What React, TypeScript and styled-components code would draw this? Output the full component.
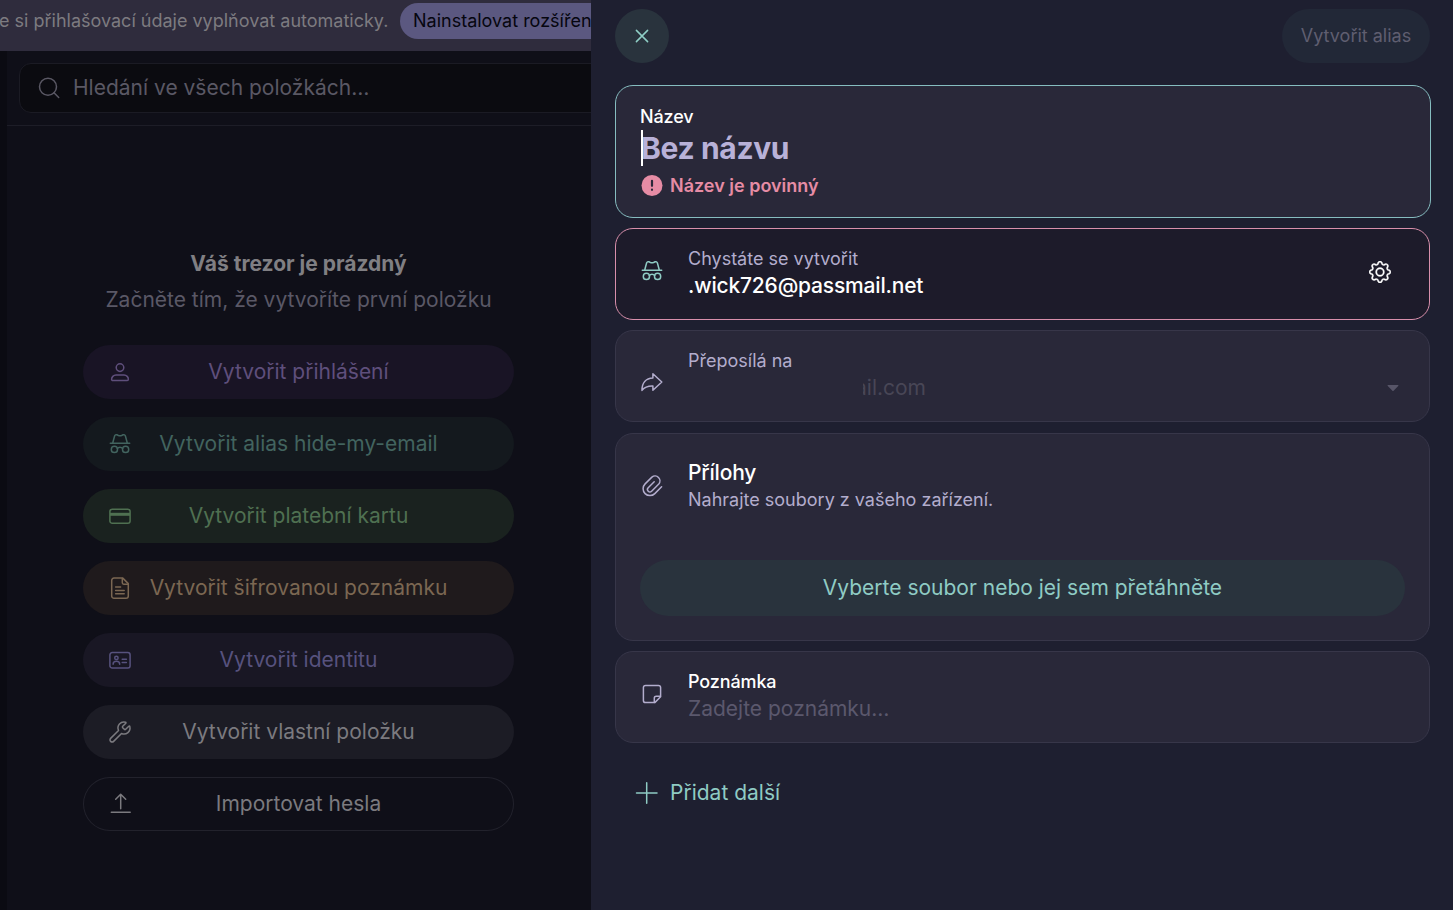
import React from 'react';
import styled, { createGlobalStyle } from 'styled-components';
import { Wrench } from 'lucide-react';
import { BsGear } from 'react-icons/bs';

const GlobalStyle = createGlobalStyle`
  *, *::before, *::after { box-sizing: border-box; }
  body { margin: 0; background: #0f0f18; }
  button { font: inherit; border: 0; padding: 0; }
`;

const Page = styled.div`
  display: grid;
  grid-template-columns: 591px 1fr;
  width: 1453px;
  height: 910px;
  overflow: hidden;
  font-family: Inter, 'Liberation Sans', sans-serif;
  font-size: 21px;
  line-height: 30px;
  white-space: nowrap;
`;

const Vault = styled.div`
  display: flex;
  flex-direction: column;
  min-width: 0;
  overflow: hidden;
  background: #0f0f18;
`;

const Banner = styled.div`
  display: flex;
  align-items: flex-start;
  flex: none;
  height: 51px;
  padding-top: 3px;
  background: #2f2c3d;
`;

const BannerText = styled.span`
  flex: none;
  width: 400px;
  margin-left: -1px;
  margin-right: 1px;
  font-size: 18px;
  line-height: 36px;
  color: #7d7b80;
`;

const InstallButton = styled.button`
  flex: none;
  height: 36px;
  padding: 0 13px;
  border-radius: 18px;
  background: #5b5880;
  color: #06060f;
  font-size: 18px;
`;

const VaultBody = styled.div`
  flex: 1;
  display: flex;
  flex-direction: column;
  border-left: 7px solid #0b0b12;
`;

const SearchBar = styled.div`
  height: 75px;
  padding: 12px 0 12px 12px;
  border-bottom: 1px solid #1d1d27;
`;

const SearchField = styled.div`
  display: flex;
  align-items: center;
  gap: 12px;
  width: 640px;
  height: 50px;
  padding-left: 17px;
  border: 1px solid #1b1b24;
  border-radius: 12px;
  background: #0b0b10;
  color: #5a5864;
`;

const Empty = styled.div`
  display: flex;
  flex-direction: column;
  align-items: center;
  padding: 123px 77px 0 76px;
`;

const EmptyTitle = styled.h2`
  margin: 0;
  font-size: 21px;
  font-weight: 700;
  line-height: 30px;
  color: #807f83;
`;

const EmptyHint = styled.p`
  margin: 6px 0 30px;
  color: #5a5866;
`;

const Actions = styled.div`
  display: flex;
  flex-direction: column;
  gap: 18px;
  width: 431px;
`;

const Action = styled.button<{ $bg: string; $fg: string; $line?: string }>`
  display: flex;
  align-items: center;
  height: 54px;
  padding: 0 25px;
  border-radius: 27px;
  background: ${p => p.$bg};
  color: ${p => p.$fg};
  box-shadow: inset 0 0 0 1px ${p => p.$line ?? 'transparent'};
`;

const ActionLabel = styled.span`
  flex: 1;
  margin-right: 24px;
  text-align: center;
`;

const Drawer = styled.aside`
  display: flex;
  flex-direction: column;
  padding: 9px 22px 0 24px;
  background: #1e1f30;
`;

const DrawerHeader = styled.header`
  display: flex;
  justify-content: space-between;
  width: 815px;
  margin-bottom: 22px;
`;

const CloseButton = styled.button`
  display: flex;
  align-items: center;
  justify-content: center;
  width: 54px;
  height: 54px;
  border-radius: 50%;
  background: #29333d;
  color: #8fcfc6;
`;

const SubmitButton = styled.button`
  width: 148px;
  height: 54px;
  border-radius: 27px;
  background: #222837;
  color: #5f5e70;
  font-size: 18px;
`;

const TitleCard = styled.section`
  position: relative;
  width: 816px;
  height: 133px;
  margin-bottom: 10px;
  padding: 17px 24px;
  border: 1px solid #86bdc0;
  border-radius: 18px;
  background: #292839;
`;

const Label = styled.div<{ $muted?: boolean }>`
  font-size: 18px;
  line-height: 27px;
  color: ${p => (p.$muted ? '#b3adcd' : '#fff')};
  font-weight: ${p => (p.$muted ? 400 : 500)};
  letter-spacing: ${p => (p.$muted ? '0' : '-0.12px')};
`;

const TitleInput = styled.div`
  padding-left: 1px;
  font-size: 30px;
  font-weight: 700;
  line-height: 36px;
  letter-spacing: -0.35px;
  color: #b8b1d8;
`;

const Caret = styled.span`
  position: absolute;
  left: 25px;
  top: 44px;
  width: 2px;
  height: 36px;
  background: #fff;
`;

const ErrorLine = styled.div`
  display: flex;
  align-items: center;
  gap: 7px;
  margin-top: 6px;
  padding-left: 1px;
  font-size: 18px;
  font-weight: 600;
  line-height: 27px;
  color: #e68ca5;
`;

const Card = styled.section<{ $height: number; $gap?: number; $alert?: boolean }>`
  width: 815px;
  height: ${p => p.$height}px;
  margin-bottom: ${p => p.$gap ?? 10}px;
  padding: 16px 24px;
  border: 1px solid ${p => (p.$alert ? '#d88fab' : '#373649')};
  border-radius: 18px;
  background: ${p => (p.$alert ? '#1d1b2a' : '#292839')};
`;

const Field = styled.div`
  display: flex;
`;

const FieldIcon = styled.div<{ $top: number; $color?: string }>`
  display: flex;
  flex: none;
  width: 24px;
  height: 24px;
  margin-top: ${p => p.$top}px;
  margin-right: 24px;
  color: ${p => p.$color ?? '#b3adcd'};
`;

const FieldText = styled.div`
  flex: 1;
`;

const Value = styled.div<{ $color?: string; $weight?: number }>`
  line-height: 27px;
  color: ${p => p.$color ?? '#fff'};
  font-weight: ${p => p.$weight ?? 400};
  letter-spacing: ${p => (p.$weight ? '-0.18px' : '0')};
`;

const HiddenValue = styled(Value)`
  display: flex;
  justify-content: flex-end;
  width: 63px;
  margin-left: 175px;
  overflow: hidden;
`;

const Trailing = styled.div<{ $top: number; $right: number; $color: string }>`
  display: flex;
  height: 21px;
  margin-top: ${p => p.$top}px;
  margin-right: ${p => p.$right}px;
  color: ${p => p.$color};
`;

const UploadHead = styled(Field)`
  padding-top: 9px;
  height: 110px;
`;

const UploadButton = styled.button`
  display: block;
  width: 765px;
  height: 56px;
  border-radius: 28px;
  background: #29333d;
  color: #8fcbc4;
`;

const AddMore = styled.button`
  display: flex;
  align-items: center;
  gap: 11px;
  align-self: flex-start;
  height: 54px;
  margin: 13px 0 0 20px;
  background: none;
  color: #8fcbc4;
`;

const IconSvg = styled.svg`
  flex: none;
  fill: none;
  stroke: currentColor;
  stroke-linecap: round;
  stroke-linejoin: round;
`;

const Icon = ({ children, size = 24 }: { children: React.ReactNode; size?: number }) => (
  <IconSvg width={size} height={size} viewBox={`0 0 ${size} ${size}`} strokeWidth={1.5}>
    {children}
  </IconSvg>
);

const SearchIcon = () => (
  <Icon>
    <circle cx="11" cy="10.8" r="8.5" />
    <path d="m17 16.8 4.7 4.7" />
  </Icon>
);

const UserIcon = () => (
  <Icon>
    <circle cx="12" cy="7.6" r="3.8" />
    <path d="M8 15h8c2.6 0 4.4 2.2 4.4 4.3 0 .7-.5 1.2-1.2 1.2H4.8c-.7 0-1.2-.5-1.2-1.2C3.6 17.2 5.4 15 8 15z" />
  </Icon>
);

const AliasIcon = () => (
  <Icon>
    <path d="M2.3 11.3h19.4M4.7 11l1.9-7c.3-1.1 1.3-1.6 2.3-1.2l1.5.7c1 .4 2.2.4 3.2 0l1.5-.7c1-.4 2 .1 2.3 1.2l1.9 7" />
    <circle cx="6.4" cy="17.4" r="3.1" />
    <circle cx="17.6" cy="17.4" r="3.1" />
    <path d="M9.4 16.6c1-1.7 4.2-1.7 5.2 0" />
  </Icon>
);

const CardIcon = () => (
  <Icon>
    <rect x="1.9" y="5.2" width="20.2" height="14" rx="2.3" />
    <path d="M2 10.3h20" strokeWidth={3} strokeLinecap="butt" />
  </Icon>
);

const NoteFileIcon = () => (
  <Icon>
    <path d="M6 2.1h8.8l5.5 5.5v12.3a2.3 2.3 0 0 1-2.3 2.3H6a2.3 2.3 0 0 1-2.3-2.3V4.4A2.3 2.3 0 0 1 6 2.1z" />
    <path d="M14.3 2.5v4.3c0 .9.5 1.4 1.4 1.4H20M7.6 11h5M7.6 14.4h8.6M7.6 17.8h8.6" />
  </Icon>
);

const IdentityIcon = () => (
  <Icon>
    <rect x="1.9" y="4.6" width="20.2" height="15.4" rx="2.3" />
    <circle cx="8.4" cy="9.9" r="1.7" />
    <path d="M5.1 16.3c0-1.9 1.3-3 3.3-3s3.3 1.1 3.3 3M14.2 11.2h4.2M14.2 14.4h4.2" />
  </Icon>
);

const ImportIcon = () => (
  <Icon>
    <path d="M12.7 16.7V2.4M7.7 7.2l5-5 5 5M3.3 20.2h18.9" />
  </Icon>
);

const ForwardIcon = () => (
  <Icon>
    <path d="M12.9 3.8 21.8 12l-8.9 8.3v-4.2C8.1 15.9 4.7 17 2 20.4 1.9 13 5.8 8.3 12.9 8z" />
  </Icon>
);

const ClipIcon = () => (
  <Icon>
    <path d="M21.6 12.8l-6.8 6.8a6.8 6.8 0 0 1-9.7-9.7l6.8-6.8a4.9 4.9 0 0 1 6.9 6.9l-7.2 7.2a2.4 2.4 0 0 1-3.4-3.4l6-6" />
  </Icon>
);

const StickyIcon = () => (
  <Icon>
    <path d="M20.6 14.8V5.6a2.2 2.2 0 0 0-2.2-2.2H5.6a2.2 2.2 0 0 0-2.2 2.2v12.8c0 1.2 1 2.2 2.2 2.2h9.2z" />
    <path d="M14.3 20.4v-4.2c0-1.1.8-1.9 1.900-1.900h4.2" />
  </Icon>
);

const ErrorIcon = () => (
  <Icon size={22}>
    <circle cx="11" cy="10.5" r="10.5" fill="currentColor" stroke="none" />
    <path d="M11 5.8v5M11 14.7v.1" stroke="#292839" strokeWidth={2.2} />
  </Icon>
);

const actions = [
  { label: 'Vytvořit přihlášení', bg: '#191425', fg: '#5f4f7c', icon: <UserIcon /> },
  { label: 'Vytvořit alias hide-my-email', bg: '#14191e', fg: '#42645f', icon: <AliasIcon /> },
  { label: 'Vytvořit platební kartu', bg: '#1a221f', fg: '#4f7051', icon: <CardIcon /> },
  { label: 'Vytvořit šifrovanou poznámku', bg: '#1f1a1c', fg: '#7b6752', icon: <NoteFileIcon /> },
  { label: 'Vytvořit identitu', bg: '#191724', fg: '#57527e', icon: <IdentityIcon /> },
  { label: 'Vytvořit vlastní položku', bg: '#1c1c25', fg: '#7b7a7f', icon: <Wrench size={24} strokeWidth={1.5} /> },
  { label: 'Importovat hesla', bg: 'transparent', fg: '#7b7a7f', line: '#22222c', icon: <ImportIcon /> },
];

export default function App() {
  return (
    <Page>
      <GlobalStyle />
      <Vault>
        <Banner>
          <BannerText>e si přihlašovací údaje vyplňovat automaticky.</BannerText>
          <InstallButton>Nainstalovat rozšíření</InstallButton>
        </Banner>
        <VaultBody>
          <SearchBar>
            <SearchField>
              <SearchIcon />
              <span>Hledání ve všech položkách…</span>
            </SearchField>
          </SearchBar>
          <Empty>
            <EmptyTitle>Váš trezor je prázdný</EmptyTitle>
            <EmptyHint>Začněte tím, že vytvoříte první položku</EmptyHint>
            <Actions>
              {actions.map(a => (
                <Action key={a.label} $bg={a.bg} $fg={a.fg} $line={a.line}>
                  {a.icon}
                  <ActionLabel>{a.label}</ActionLabel>
                </Action>
              ))}
            </Actions>
          </Empty>
        </VaultBody>
      </Vault>

      <Drawer>
        <DrawerHeader>
          <CloseButton>
            <Icon>
              <path d="m6.4 6.4 11.2 11.2M17.6 6.4 6.4 17.6" />
            </Icon>
          </CloseButton>
          <SubmitButton>Vytvořit alias</SubmitButton>
        </DrawerHeader>

        <TitleCard>
          <Label>Název</Label>
          <TitleInput>Bez názvu</TitleInput>
          <Caret />
          <ErrorLine>
            <ErrorIcon />
            Název je povinný
          </ErrorLine>
        </TitleCard>

        <Card $height={92} $alert>
          <Field>
            <FieldIcon $top={14} $color="#8fcbc4"><AliasIcon /></FieldIcon>
            <FieldText>
              <Label $muted>Chystáte se vytvořit</Label>
              <Value $weight={500}>.wick726@passmail.net</Value>
            </FieldText>
            <Trailing $top={16} $right={14} $color="#fff"><BsGear size={22} strokeWidth={0.25} /></Trailing>
          </Field>
        </Card>

        <Card $height={92} $gap={11}>
          <Field>
            <FieldIcon $top={23}><ForwardIcon /></FieldIcon>
            <FieldText>
              <Label $muted>Přeposílá na</Label>
              <HiddenValue $color="#484656">ail.com</HiddenValue>
            </FieldText>
            <Trailing $top={38} $right={6} $color="#575568">
              <svg width="12" height="7" viewBox="0 0 12 7">
                <path d="M1.2 0h9.6c.6 0 .8.6.4 1L6.6 5.7c-.3.3-.9.3-1.2 0L.8 1C.4.6.6 0 1.2 0z" fill="currentColor" />
              </svg>
            </Trailing>
          </Field>
        </Card>

        <Card $height={208}>
          <UploadHead>
            <FieldIcon $top={15}><ClipIcon /></FieldIcon>
            <FieldText>
              <Value $weight={500}>Přílohy</Value>
              <Label $muted>Nahrajte soubory z vašeho zařízení.</Label>
            </FieldText>
          </UploadHead>
          <UploadButton>Vyberte soubor nebo jej sem přetáhněte</UploadButton>
        </Card>

        <Card $height={92}>
          <Field>
            <FieldIcon $top={14}><StickyIcon /></FieldIcon>
            <FieldText>
              <Label>Poznámka</Label>
              <Value $color="#5b586d">Zadejte poznámku…</Value>
            </FieldText>
          </Field>
        </Card>

        <AddMore>
          <Icon>
            <path d="M1.5 12H22M11.7 1.8v20.4" />
          </Icon>
          Přidat další
        </AddMore>
      </Drawer>
    </Page>
  );
}
